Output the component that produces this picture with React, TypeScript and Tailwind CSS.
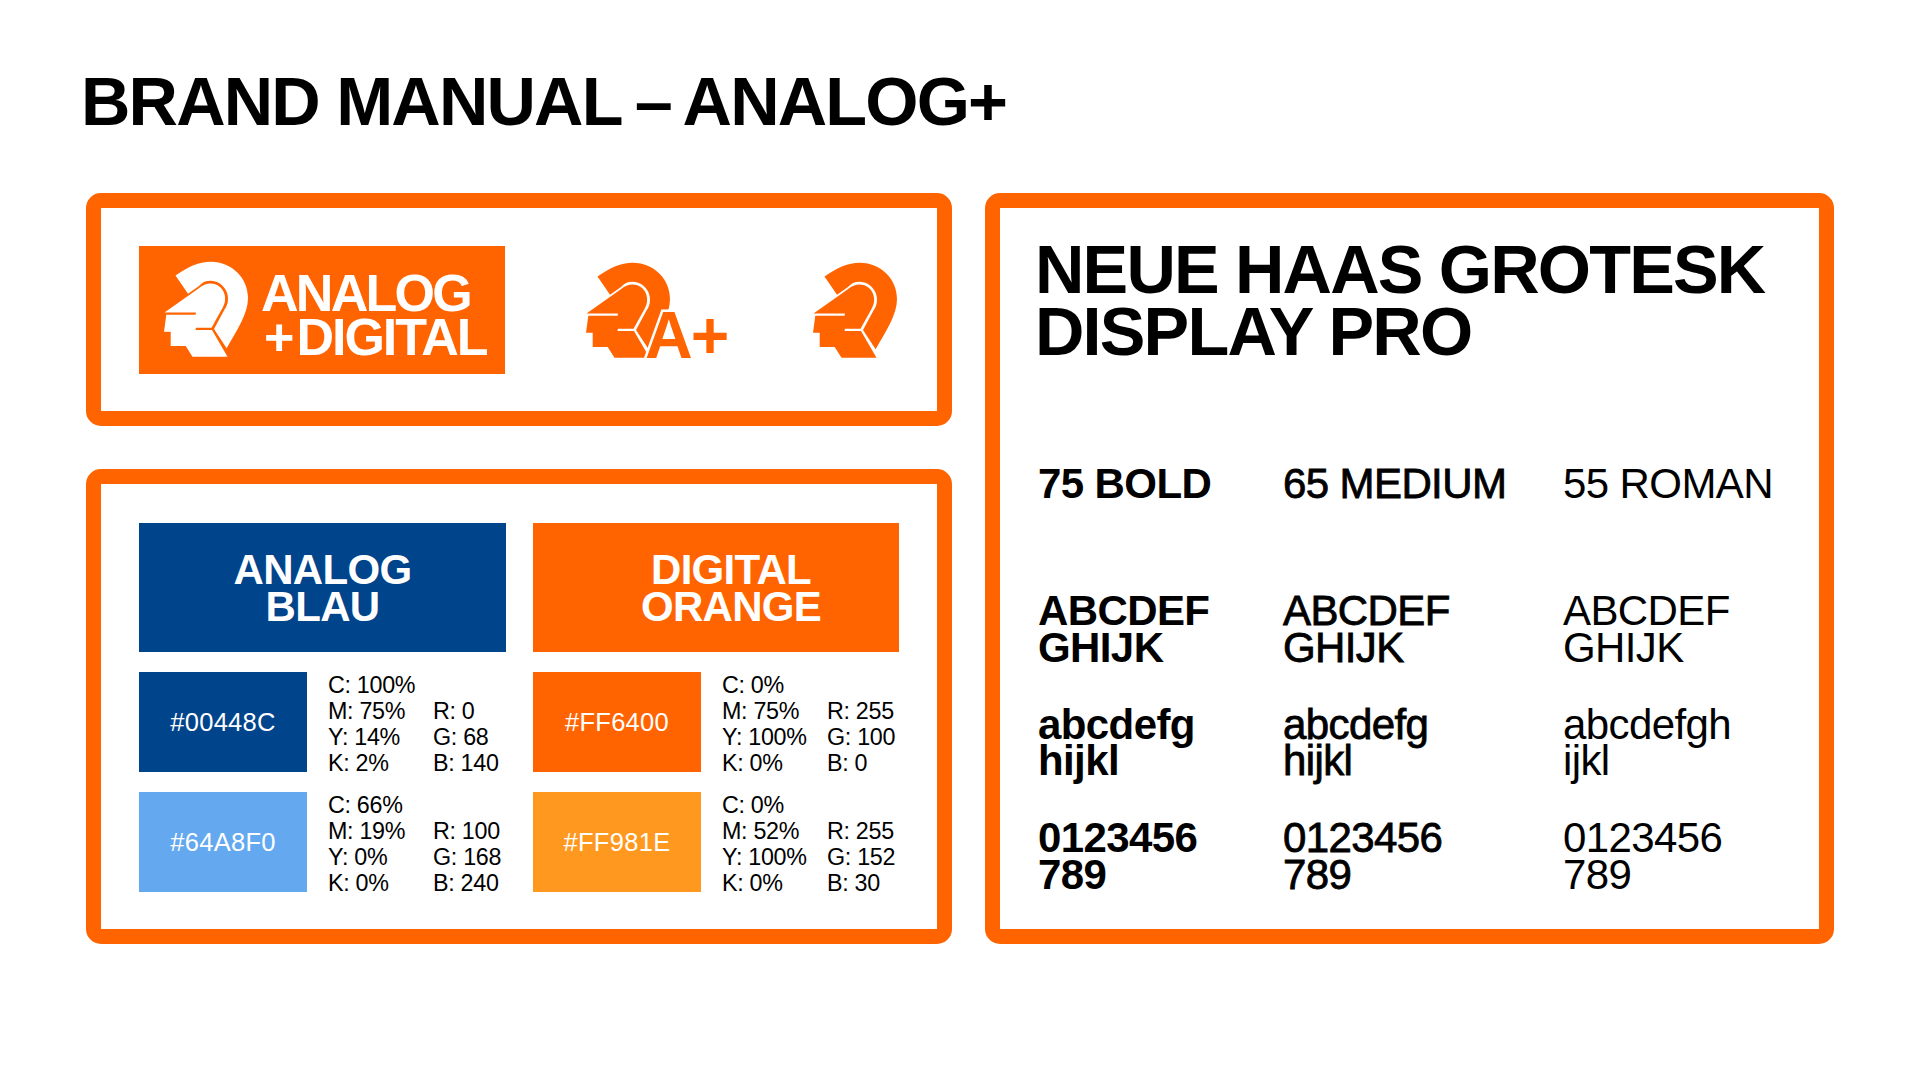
import React from "react";

const ORANGE = "#FF6400";

const CRESCENT =
    "M11.5 14.5 C24 5.5 36 0.5 47 0.7 C68 1 84 17 84 37 C84 53 73 69 62.6 87.3 L50 68 L60.5 48.5 C64.5 43 65 36.5 62.5 30.5 C59.5 23.5 53 19.7 46.5 19.7 C41.5 19.7 38 21.5 35 25 L24 32.8 Z";
const FACE =
    "M0.5 51.5 L34.5 27.5 C38.5 24.3 42.5 22.5 46.5 22.5 C52 22.5 57.5 25.5 59.8 31.2 C62 36.5 61.5 41.5 58.5 47 L47.5 66.8 L29.3 66.8 L32 51.5 Z";
const CHIN =
    "M2.3 53.8 L34.2 53.8 L31.5 69 L48 69 L63.5 95.7 L28.5 95.7 L21.7 85 L6.7 85 L6.7 70.7 L0 70.7 Z";

const HelmetPaths = ({ fill }: { fill: string }) => (
    <g fill={fill}>
        <path d={CRESCENT} />
        <path d={FACE} />
        <path d={CHIN} />
    </g>
);

const Helmet = ({ fill }: { fill: string }) => (
    <svg viewBox="0 0 84 96" width={84} height={96} className="shrink-0">
        <HelmetPaths fill={fill} />
    </svg>
);

const HelmetPlus = () => (
    <svg
        viewBox="0 0 152 96"
        width={152}
        height={96}
        className="shrink-0 overflow-visible"
    >
        <HelmetPaths fill={ORANGE} />
        <text
            x="59"
            y="95.7"
            fontSize="66"
            fontWeight="700"
            fontFamily="'Liberation Sans', Arial, sans-serif"
            letterSpacing="-2"
            fill={ORANGE}
            stroke="#ffffff"
            strokeWidth="5"
            paintOrder="stroke"
        >
            A+
        </text>
    </svg>
);

type Swatch = {
    hex: string;
    bg: string;
    cmyk: string[];
    rgb: string[];
};

const SwatchRow = ({ swatch }: { swatch: Swatch }) => (
    <div className="mt-[20px] flex h-[100px] items-start">
        <div
            className={`flex h-[100px] w-[168px] shrink-0 items-center justify-center text-[25.5px] tracking-[0.3px] text-white ${swatch.bg}`}
        >
            {swatch.hex}
        </div>
        <div className="ml-[21px] grid grid-cols-[105px_auto] text-[23.3px] leading-[26px] tracking-[-0.3px] text-black">
            <span>{swatch.cmyk[0]}</span>
            <span></span>
            <span>{swatch.cmyk[1]}</span>
            <span>{swatch.rgb[0]}</span>
            <span>{swatch.cmyk[2]}</span>
            <span>{swatch.rgb[1]}</span>
            <span>{swatch.cmyk[3]}</span>
            <span>{swatch.rgb[2]}</span>
        </div>
    </div>
);

const blues: Swatch[] = [
    {
        hex: "#00448C",
        bg: "bg-[#00448C]",
        cmyk: ["C: 100%", "M: 75%", "Y: 14%", "K: 2%"],
        rgb: ["R: 0", "G: 68", "B: 140"],
    },
    {
        hex: "#64A8F0",
        bg: "bg-[#64A8F0]",
        cmyk: ["C: 66%", "M: 19%", "Y: 0%", "K: 0%"],
        rgb: ["R: 100", "G: 168", "B: 240"],
    },
];

const oranges: Swatch[] = [
    {
        hex: "#FF6400",
        bg: "bg-[#FF6400]",
        cmyk: ["C: 0%", "M: 75%", "Y: 100%", "K: 0%"],
        rgb: ["R: 255", "G: 100", "B: 0"],
    },
    {
        hex: "#FF981E",
        bg: "bg-[#FF981E]",
        cmyk: ["C: 0%", "M: 52%", "Y: 100%", "K: 0%"],
        rgb: ["R: 255", "G: 152", "B: 30"],
    },
];

const Specimen = ({ lines, className }: { lines: string[]; className: string }) => (
    <div className={className}>
        {lines.map((l) => (
            <div key={l}>{l}</div>
        ))}
    </div>
);

const App = () => {
    const bold = "font-bold";
    const medium = "font-normal [-webkit-text-stroke:0.8px_black]";
    const roman = "font-normal";

    return (
        <div className="h-[1080px] w-[1920px] bg-white pl-[86px] pt-[67px] font-['Liberation_Sans',Arial,sans-serif] text-black">
            <h1 className="-ml-[5px] text-[68.4px] font-bold leading-[68px] tracking-[-1.8px]">
                BRAND MANUAL <span className="-mx-[3px]">–</span> ANALOG+
            </h1>

            <div className="mt-[58px] flex gap-[33px]">
                {/* left column */}
                <div className="flex w-[866px] flex-col gap-[43px]">
                    {/* logos */}
                    <div className="flex h-[233px] items-center rounded-[15px] border-[15px] border-[#FF6400] pl-[38px]">
                        <div className="flex h-[128px] w-[366px] shrink-0 items-start bg-[#FF6400] pl-[25px] pt-[15px]">
                            <Helmet fill="#ffffff" />
                            <div className="ml-[13px] mt-[10.5px] text-[52px] font-bold leading-[44.3px] text-white">
                                <div className="tracking-[-2.7px]">ANALOG</div>
                                <div className="ml-[3px] tracking-[-2px]">
                                    <span className="mr-[4px]">+</span>DIGITAL
                                </div>
                            </div>
                        </div>
                        <div className="ml-[81px]">
                            <HelmetPlus />
                        </div>
                        <div className="ml-[75px]">
                            <Helmet fill={ORANGE} />
                        </div>
                    </div>

                    {/* colours */}
                    <div className="flex h-[475px] gap-[27px] rounded-[15px] border-[15px] border-[#FF6400] pl-[38px] pt-[39px]">
                        <div className="w-[367px]">
                            <div className="flex h-[129px] flex-col items-center justify-center bg-[#00448C] text-[42px] font-bold leading-[37px] tracking-[-0.7px] text-white">
                                <span>ANALOG</span>
                                <span>BLAU</span>
                            </div>
                            {blues.map((s) => (
                                <SwatchRow key={s.hex} swatch={s} />
                            ))}
                        </div>
                        <div className="w-[366px]">
                            <div className="flex h-[129px] flex-col items-center justify-center bg-[#FF6400] pl-[30px] text-[42px] font-bold leading-[37px] tracking-[-0.7px] text-white">
                                <span>DIGITAL</span>
                                <span>ORANGE</span>
                            </div>
                            {oranges.map((s) => (
                                <SwatchRow key={s.hex} swatch={s} />
                            ))}
                        </div>
                    </div>
                </div>

                {/* typeface */}
                <div className="h-[751px] w-[849px] rounded-[15px] border-[15px] border-[#FF6400] pl-[38px] pt-[31px]">
                    <h2 className="-ml-[3px] text-[68.4px] font-bold leading-[61.7px] tracking-[-1.8px]">
                        NEUE HAAS GROTESK
                        <br />
                        DISPLAY PRO
                    </h2>

                    <div className="mt-[104px] grid grid-cols-[245px_280px_1fr] text-[42px] leading-[36.7px] tracking-[-0.6px]">
                        <div className={bold}>75 BOLD</div>
                        <div className={medium}>65 MEDIUM</div>
                        <div className={roman}>55 ROMAN</div>
                    </div>

                    <div className="mt-[90px] grid grid-cols-[245px_280px_1fr] gap-y-[40px] text-[42px] leading-[36.7px] tracking-[-0.6px]">
                        <Specimen className={bold} lines={["ABCDEF", "GHIJK"]} />
                        <Specimen className={medium} lines={["ABCDEF", "GHIJK"]} />
                        <Specimen className={roman} lines={["ABCDEF", "GHIJK"]} />
                        <Specimen className={bold} lines={["abcdefg", "hijkl"]} />
                        <Specimen className={medium} lines={["abcdefg", "hijkl"]} />
                        <Specimen className={roman} lines={["abcdefgh", "ijkl"]} />
                        <Specimen className={bold} lines={["0123456", "789"]} />
                        <Specimen className={medium} lines={["0123456", "789"]} />
                        <Specimen className={roman} lines={["0123456", "789"]} />
                    </div>
                </div>
            </div>
        </div>
    );
};

export default App;
